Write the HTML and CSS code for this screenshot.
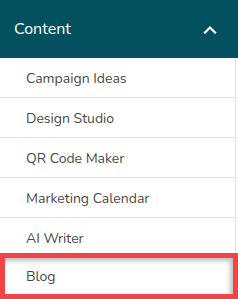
FILE: index.html
```html
<!DOCTYPE html>
<html>
<head>
<meta charset="utf-8">
<link rel="stylesheet" href="styles.css">
</head>
<body>
<nav class="menu">
  <div class="menu-head">
    <span class="menu-title">Content</span>
    <svg class="chev" width="14" height="9" viewBox="0 0 14 9"><path d="M2 7.5 L7 2.5 L12 7.5" fill="none" stroke="#fff" stroke-width="2.2" stroke-linecap="square"/></svg>
  </div>
  <ul class="menu-list">
    <li class="item">Campaign Ideas</li>
    <li class="item">Design Studio</li>
    <li class="item">QR Code Maker</li>
    <li class="item">Marketing Calendar</li>
    <li class="item">AI Writer</li>
    <li class="item active">Blog</li>
  </ul>
</nav>
</body>
</html>
```
FILE: styles.css
```css
* { box-sizing: border-box; }
html, body { margin: 0; padding: 0; background: #fff; }
body { width: 238px; height: 299px; overflow: hidden; font-family: "Nunito", "Lato", "Open Sans", sans-serif; }
.menu { width: 238px; }
.menu-head {
  height: 58px;
  background: #03515f;
  display: flex;
  align-items: center;
  justify-content: space-between;
  padding: 0 21px 0 14px;
}
.menu-title { color: #fff; font-size: 16px; }
.chev { display: block; }
.menu-list { list-style: none; margin: 0; padding: 0; width: 236px; border-right: 1px solid #e3e3e3; }
.item {
  height: 40px;
  display: flex;
  align-items: center;
  padding-left: 26px;
  padding-top: 1px;
  font-size: 14px;
  color: #4a4a4a;
  border-bottom: 1px solid #e3e3e3;
}
.item.active {
  margin-top: -5px;
  height: 46px;
  width: 238px;
  border: 5px solid #f44346;
  padding-left: 21px;
  box-shadow: inset -3px 3px 4px rgba(0,0,0,0.25);
}
```
